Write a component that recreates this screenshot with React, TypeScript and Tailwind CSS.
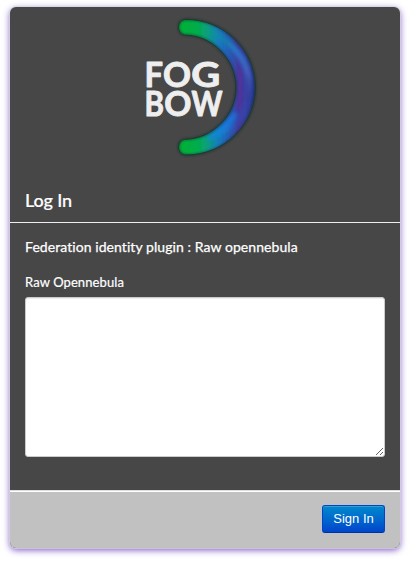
const tube =
  'M186 19.4 C224 19.4 255.4 50 255.4 87.5 C255.4 125 224 155 186 155 C176 154.6 176 139.4 186 139.2 C213 138.5 236 115 236 87.5 C236 60 213 35.8 186 35.2 C176 34.8 176 19.6 186 19.4 Z';

function Logo() {
  return (
    <svg className="block h-[155px] w-full shrink-0" viewBox="10 7 390 155" role="img" aria-label="Fogbow">
      <defs>
        <linearGradient id="bow" gradientUnits="userSpaceOnUse" x1="180" y1="0" x2="255" y2="0">
          <stop offset="0" stopColor="#00b035" />
          <stop offset="0.24" stopColor="#03ad4c" />
          <stop offset="0.38" stopColor="#0c9a88" />
          <stop offset="0.52" stopColor="#1878c0" />
          <stop offset="0.66" stopColor="#2858b4" />
          <stop offset="0.78" stopColor="#433b9d" />
          <stop offset="0.88" stopColor="#36409f" />
          <stop offset="1" stopColor="#253590" />
        </linearGradient>
        <linearGradient id="shine" gradientUnits="userSpaceOnUse" x1="0" y1="27" x2="0" y2="147">
          <stop offset="0" stopColor="#00c040" stopOpacity="0" />
          <stop offset="0.2" stopColor="#1699e6" stopOpacity="0.8" />
          <stop offset="0.38" stopColor="#4f72d0" stopOpacity="0.8" />
          <stop offset="0.6" stopColor="#4040a8" stopOpacity="0.3" />
          <stop offset="0.78" stopColor="#2f52c4" stopOpacity="0.6" />
          <stop offset="0.87" stopColor="#149be2" stopOpacity="0.4" />
          <stop offset="1" stopColor="#00c040" stopOpacity="0" />
        </linearGradient>
        <clipPath id="inside">
          <path d={tube} />
        </clipPath>
        <filter id="edge" x="-30%" y="-30%" width="160%" height="160%">
          <feGaussianBlur stdDeviation="0.6" />
        </filter>
        <filter id="rim" x="-30%" y="-30%" width="160%" height="160%">
          <feGaussianBlur stdDeviation="0.9" />
        </filter>
        <filter id="glow" x="-60%" y="-30%" width="220%" height="160%">
          <feGaussianBlur stdDeviation="2" />
        </filter>
      </defs>
      <path d={tube} fill="url(#bow)" stroke="#2b3b3b" strokeWidth="1" filter="url(#edge)" />
      <g fill="none" strokeLinecap="round" clipPath="url(#inside)">
        <path d="M239 70 Q243 88 239 106" stroke="#5b2f99" strokeWidth="5" opacity="0.75" filter="url(#glow)" />
        <path d="M202 29 C229 36 249 60 250 86 C248 112 230 133 202 145" stroke="url(#shine)" strokeWidth="4.5" filter="url(#glow)" />
        <path d="M210 137 Q226 129 234 115" stroke="#1684e8" strokeWidth="5" opacity="0.8" filter="url(#glow)" />
      </g>
      <path d={tube} fill="none" stroke="#17332f" strokeWidth="1.8" opacity="0.75" filter="url(#rim)" />
      <g fill="#eeeeee" stroke="#eeeeee" strokeWidth="0.9" strokeLinejoin="round" fontFamily="Lato, sans-serif" fontWeight="700" fontSize="33.5">
        <text x="144.6" y="87.4" textLength="18.5" lengthAdjust="spacingAndGlyphs">F</text>
        <text x="163" y="87.4" textLength="28" lengthAdjust="spacingAndGlyphs">O</text>
        <text x="191.2" y="87.4" textLength="29" lengthAdjust="spacingAndGlyphs">G</text>
        <text x="144.6" y="116.2" textLength="19.5" lengthAdjust="spacingAndGlyphs">B</text>
        <text x="164.2" y="116.2" textLength="27.2" lengthAdjust="spacingAndGlyphs">O</text>
        <text x="191.6" y="116.2" textLength="31" lengthAdjust="spacingAndGlyphs">W</text>
      </g>
    </svg>
  );
}

export default function App() {
  return (
    <main className="h-[562px] w-[411px] overflow-hidden bg-white pt-[7px] pl-[10px] font-['Lato',sans-serif] text-white">
      <form
        className="flex h-[541px] w-[390px] flex-col overflow-hidden rounded-[6px] bg-[#474747] shadow-[0_0_0_1px_rgba(215,212,225,0.7),0_2px_7px_0_#7a55c0]"
        onSubmit={(event) => event.preventDefault()}
      >
        <Logo />
        <header className="flex h-[61px] shrink-0 items-center border-b border-[#eeeeee] px-[15px] pt-[15px]">
          <h1 className="text-[18px] leading-5 font-medium tracking-[-0.15px] [-webkit-text-stroke:0.2px_white]">Log In</h1>
        </header>
        <section className="flex h-[260px] shrink-0 flex-col px-[15px] pt-[14px]">
          <h2 className="text-[14px] leading-5 tracking-[0.07px] whitespace-nowrap [-webkit-text-stroke:0.25px_white]">
            Federation identity plugin : Raw opennebula
          </h2>
          <label htmlFor="credentials" className="mt-[15px] text-[13px] leading-5 tracking-[0.1px] [-webkit-text-stroke:0.2px_white]">
            Raw Opennebula
          </label>
          <textarea
            id="credentials"
            className="mt-[5px] block h-40 w-[360px] shrink-0 resize rounded-[3px] border border-[#cccccc] bg-white p-1 text-[14px] text-[#555555] shadow-[inset_0_1px_1px_rgba(0,0,0,0.075)] outline-none"
          />
        </section>
        <footer className="mt-auto flex h-[58px] shrink-0 items-start justify-end border-t border-[#dddddd] bg-[#c1c1c1] px-[15px] pt-[14px] shadow-[inset_0_1px_0_white]">
          <button className="h-7 w-[63px] rounded-[3px] border border-[#0044cc] border-b-[#003399] bg-linear-to-b from-[#0088cc] to-[#0044cc] pb-px font-['Liberation_Sans',Arial,sans-serif] text-[13px] leading-5 text-white shadow-[inset_0_1px_0_rgba(255,255,255,0.2)]">
            Sign In
          </button>
        </footer>
      </form>
    </main>
  );
}
